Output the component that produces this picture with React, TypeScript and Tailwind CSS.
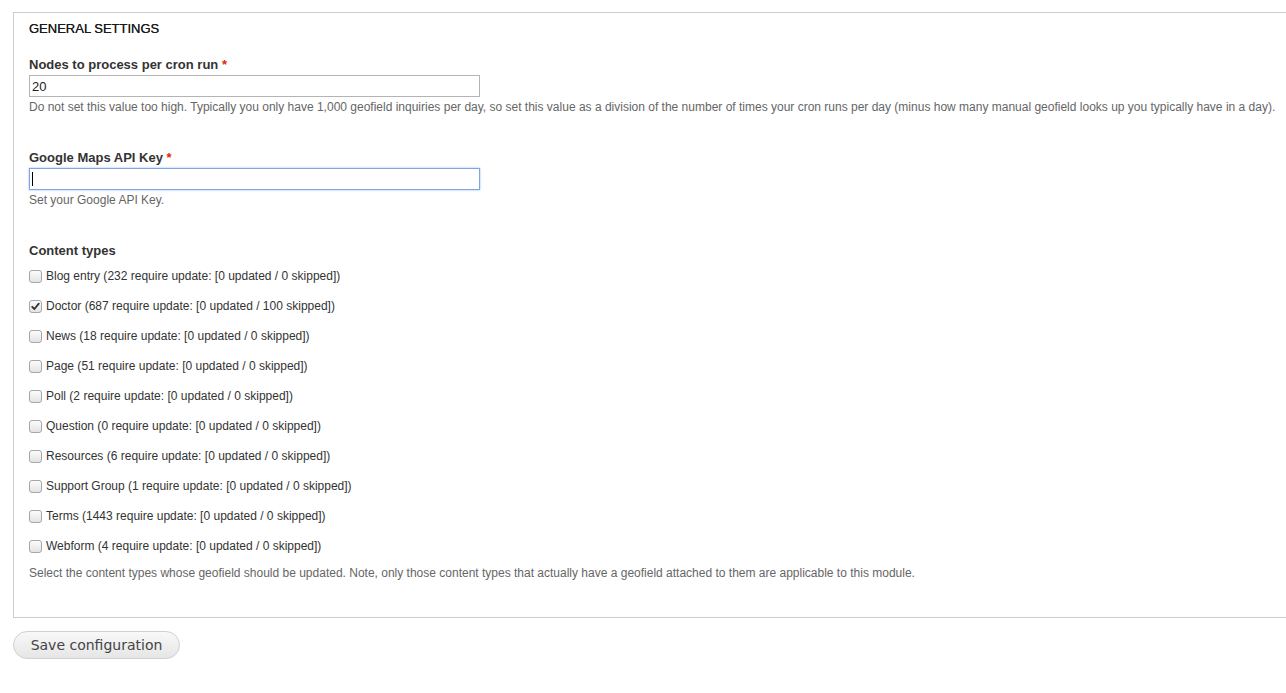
import React from "react";

const types: { name: string; count: string; updated: string; skipped: string; checked?: boolean }[] = [
  { name: "Blog entry", count: "232", updated: "0", skipped: "0" },
  { name: "Doctor", count: "687", updated: "0", skipped: "100", checked: true },
  { name: "News", count: "18", updated: "0", skipped: "0" },
  { name: "Page", count: "51", updated: "0", skipped: "0" },
  { name: "Poll", count: "2", updated: "0", skipped: "0" },
  { name: "Question", count: "0", updated: "0", skipped: "0" },
  { name: "Resources", count: "6", updated: "0", skipped: "0" },
  { name: "Support Group", count: "1", updated: "0", skipped: "0" },
  { name: "Terms", count: "1443", updated: "0", skipped: "0" },
  { name: "Webform", count: "4", updated: "0", skipped: "0" },
];

function Checkbox({ checked }: { checked?: boolean }) {
  return (
    <span className="flex h-[13px] w-[13px] items-center justify-center rounded-[3px] border border-[#a6a6a6] bg-gradient-to-b from-[#fcfcfc] to-[#e3e3e3]">
      {checked && (
        <svg width="9" height="9" viewBox="0 0 9 9">
          <path d="M1.2 4.8 L3.4 7 L7.8 1.6" fill="none" stroke="#333" strokeWidth="1.8" strokeLinecap="round" strokeLinejoin="round" />
        </svg>
      )}
    </span>
  );
}

export default function App() {
  return (
    <div className="min-h-[693px] bg-white pt-[12px] pl-[13px] text-[#333]" style={{ fontFamily: '"Liberation Sans", Arial, sans-serif' }}>
      <div className="border-t border-b border-l border-[#cccccc] pl-[15px] pb-[36px]">
        <div className="mt-[8px] text-[13px] leading-[16px] uppercase text-[#1a1a1a] [text-shadow:0_0_0.3px_#222]">General settings</div>

        <div className="mt-[20px] text-[13px] font-bold leading-[16px] text-[#333]">
          Nodes to process per cron run <span className="text-[#e32700]">*</span>
        </div>
        <input
          readOnly
          value="20"
          className="mt-[2px] block h-[22px] w-[451px] border border-[#b4b4b4] bg-white px-[2px] text-[13px] text-[#222] outline-none"
          style={{ fontFamily: '"Liberation Sans", Arial, sans-serif' }}
        />
        <div className="mt-[3px] text-[12px] leading-[15px] text-[#666]">
          Do not set this value too high. Typically you only have 1,000 geofield inquiries per day, so set this value as a division of the number of times your cron runs per day (minus how many manual geofield looks up you typically have in a day).
        </div>

        <div className="mt-[35px] text-[13px] font-bold leading-[16px] text-[#333]">
          Google Maps API Key <span className="text-[#e32700]">*</span>
        </div>
        <div className="relative mt-[2px] h-[22px] w-[451px]">
          <input
            readOnly
            value=""
            className="block h-[22px] w-[451px] border border-[#7ea6e6] bg-white px-[2px] text-[13px] outline-none shadow-[0_0_2px_rgba(80,140,230,0.6)]"
          />
          <span className="absolute left-[3px] top-[4px] h-[14px] w-[1px] bg-black" />
        </div>
        <div className="mt-[3px] text-[12px] leading-[15px] text-[#666]">Set your Google API Key.</div>

        <div className="mt-[35px] text-[13px] font-bold leading-[16px] text-[#333]">Content types</div>
        <div className="mt-[2px] flex flex-col">
          {types.map((t) => (
            <div key={t.name} className="flex h-[30px] items-center gap-[4px]">
              <Checkbox checked={t.checked} />
              <span className="text-[12px] leading-[15px] text-[#333]">
                {t.name} ({t.count} require update: [{t.updated} updated / {t.skipped} skipped])
              </span>
            </div>
          ))}
        </div>
        <div className="mt-[5px] text-[12px] leading-[15px] text-[#666]">
          Select the content types whose geofield should be updated. Note, only those content types that actually have a geofield attached to them are applicable to this module.
        </div>
      </div>

      <button
        className="mt-[13px] flex h-[28px] w-[167px] items-center justify-center rounded-full border border-[#d0d0d0] bg-gradient-to-b from-[#f8f8f8] to-[#e6e6e6] text-[14px] text-[#444]"
        style={{ fontFamily: '"DejaVu Sans", Verdana, sans-serif' }}
      >
        Save configuration
      </button>
    </div>
  );
}
